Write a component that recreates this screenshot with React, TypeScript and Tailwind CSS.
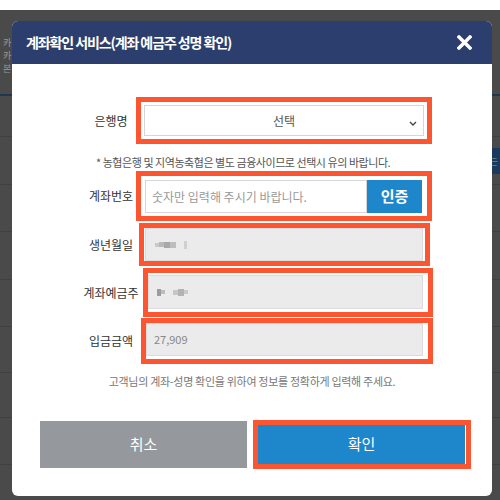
import React from 'react'

const RED = 'border-[#fb5531]'

interface FieldRowProps {
  label: string
  boxClass: string
  children: React.ReactNode
}

function FieldRow({ label, boxClass, children }: FieldRowProps) {
  return (
    <div className="flex items-center">
      <div className="flex w-[48px] shrink-0 justify-center whitespace-nowrap text-[12px] text-[#333]">
        {label}
      </div>
      <div className={`border-[5px] ${RED} bg-white ${boxClass}`}>{children}</div>
    </div>
  )
}

function Blur({ blocks }: { blocks: [number, number, string][] }) {
  return (
    <div className="flex items-center">
      {blocks.map(([w, h, c], i) => (
        <div key={i} className={c} style={{ width: w, height: h }} />
      ))}
    </div>
  )
}

function BankModal() {
  return (
    <div className="absolute left-[12px] top-[21px] flex h-[475px] w-[480px] flex-col overflow-hidden rounded-[6px] bg-white">
      <div className="flex h-[43px] shrink-0 items-center justify-between bg-[#2c3e6d] pl-[14px] pr-[20px]">
        <span className="text-[14px] font-semibold tracking-[-1.1px] text-white">
          계좌확인 서비스(계좌 예금주 성명 확인)
        </span>
        <svg width="15" height="15" viewBox="0 0 15 15">
          <path d="M2 2 L13 13 M13 2 L2 13" stroke="#fff" strokeWidth="3.4" strokeLinecap="square" />
        </svg>
      </div>

      <div className="flex flex-col pl-[75px] pt-[33px]">
        {/* bank select */}
        <FieldRow label="은행명" boxClass="ml-[1px] h-[47px] w-[296px] p-[3px]">
          <div className="relative flex h-full w-full items-center justify-center border border-[#d6d6d6] text-[12px] text-[#555]">
            선택
            <svg className="absolute right-[6px] top-[15px]" width="8" height="5" viewBox="0 0 8 5">
              <path d="M1 1 L4 4 L7 1" stroke="#444" strokeWidth="1.4" fill="none" />
            </svg>
          </div>
        </FieldRow>

        <div className="ml-[9px] pt-[10px] text-[11px] leading-[16px] tracking-[-0.45px] text-[#555]">
          * 농협은행 및 지역농축협은 별도 금융사이므로 선택시 유의 바랍니다.
        </div>

        {/* account number */}
        <div className="mt-[1px]">
          <FieldRow label="계좌번호" boxClass="ml-[1px] flex h-[50px] w-[296px] pl-[4px] pr-[5px] pt-[4px] pb-[3px]">
            <div className="flex h-full flex-1 items-center border border-[#d6d6d6] pl-[6px] text-[12px] text-[#999]">
              숫자만 입력해 주시기 바랍니다.
            </div>
            <div className="flex h-full w-[55px] items-center justify-center bg-[#1e87cb] text-[15px] font-bold text-white">
              인증
            </div>
          </FieldRow>
        </div>

        {/* birth */}
        <div className="mt-[2px]">
          <FieldRow label="생년월일" boxClass="ml-[4px] h-[43px] w-[291px] pl-[1px] pr-[2px] py-0">
            <div className="flex h-full items-center border border-[#dcdcdc] bg-[#ebebeb] pl-[9px]">
              <Blur
                blocks={[
                  [4, 4, 'bg-[#c9c9c9]'],
                  [5, 5, 'bg-[#b9b9b9]'],
                  [6, 6, 'bg-[#a8a8a8]'],
                  [6, 6, 'bg-[#bdbdbd]'],
                  [8, 3, 'bg-transparent'],
                  [3, 8, 'bg-[#d0d0d0]'],
                ]}
              />
            </div>
          </FieldRow>
        </div>

        {/* holder */}
        <div className="mt-[2px]">
          <FieldRow label="계좌예금주" boxClass="ml-[8px] h-[49px] w-[290px] pl-[0px] pr-[5px] pt-[2px] pb-[3px]">
            <div className="flex h-full items-center border border-[#dcdcdc] bg-[#ebebeb] pl-[8px]">
              <Blur
                blocks={[
                  [4, 7, 'bg-[#9c9c9c]'],
                  [4, 4, 'bg-[#bdbdbd]'],
                  [8, 4, 'bg-transparent'],
                  [5, 5, 'bg-[#c6c6c6]'],
                  [6, 7, 'bg-[#b3b3b3]'],
                  [4, 4, 'bg-[#c9c9c9]'],
                ]}
              />
            </div>
          </FieldRow>
        </div>

        {/* amount */}
        <div className="mt-[1px]">
          <FieldRow label="입금금액" boxClass="ml-[6px] h-[46px] w-[292px] pr-[5px] pb-[3px]">
            <div className="flex h-full items-center border border-[#dcdcdc] bg-[#ebebeb] pl-[7px] text-[11px] text-[#888]">
              27,909
            </div>
          </FieldRow>
        </div>

        <div className="-ml-[75px] mt-[9px] text-center text-[11px] leading-[16px] tracking-[-0.3px] text-[#777]">
          고객님의 계좌-성명 확인을 위하여 정보를 정확하게 입력해 주세요.
        </div>
      </div>

      <div className="mt-[31px] flex items-center pl-[28px]">
        <div className="flex h-[47px] w-[207px] items-center justify-center bg-[#95999d] text-[15px] text-white">
          취소
        </div>
        <div className={`ml-[6px] h-[49px] w-[218px] border-[5px] ${RED} pr-[1px]`}>
          <div className="flex h-full w-full items-center justify-center bg-[#1e87cb] text-[15px] text-white">
            확인
          </div>
        </div>
      </div>
    </div>
  )
}

export default function App() {
  const rows = [41, 48, 47, 48, 47, 46, 45, 47]
  return (
    <div className="relative h-[500px] w-[500px] overflow-hidden bg-white font-['Noto_Sans_CJK_KR','Noto_Sans',sans-serif]">
      <div className="h-[10px] bg-white" />
      <div className="h-[490px] bg-[#4a4a4a]">
        <div className="flex h-[86px] flex-col gap-[2px] border-b-2 border-[#1f364d] pl-[3px] pt-[27px] text-[9px] leading-[11px] text-[#9a9a9a]">
          <div>카</div>
          <div>카</div>
          <div>본</div>
        </div>
        {rows.map((h, i) => (
          <div key={i} className="flex items-center justify-end border-b border-[#404040]" style={{ height: h }}>
            {i === 1 && (
              <div className="flex h-[26px] w-[14px] items-center bg-[#1b3a5c] pl-[2px] text-[11px] text-[#6d8094]">
                는
              </div>
            )}
          </div>
        ))}
      </div>
      <BankModal />
    </div>
  )
}
